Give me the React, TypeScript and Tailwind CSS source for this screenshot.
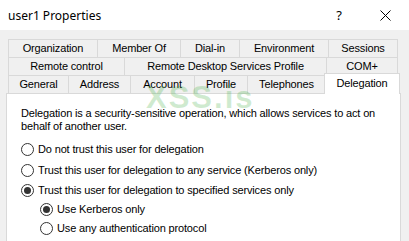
import React from 'react';

const tabRow1 = [
  { label: 'Organization', w: 'w-[89px]' },
  { label: 'Member Of', w: 'w-[83px]' },
  { label: 'Dial-in', w: 'w-[59px]' },
  { label: 'Environment', w: 'w-[89px]' },
  { label: 'Sessions', w: 'w-[70px]' },
];

const tabRow2 = [
  { label: 'Remote control', w: 'w-[116px]' },
  { label: 'Remote Desktop Services Profile', w: 'w-[202px]' },
  { label: 'COM+', w: 'w-[72px]' },
];

const tabRow3 = [
  { label: 'General', w: 'w-[60px]' },
  { label: 'Address', w: 'w-[62px]' },
  { label: 'Account', w: 'w-[64px]' },
  { label: 'Profile', w: 'w-[53px]' },
  { label: 'Telephones', w: 'w-[78px]' },
];

const Tab: React.FC<{ label: string; w: string; last?: boolean }> = ({ label, w, last }) => (
  <div
    className={`${w} h-full flex items-center justify-center border-t border-l border-[#d9d9d9] bg-[#f0f0f0] text-[#000] ${last ? 'border-r' : ''}`}
  >
    {label}
  </div>
);

const Radio: React.FC<{ checked?: boolean }> = ({ checked }) => (
  <span className="w-[13px] h-[13px] rounded-full border border-[#333333] bg-white flex items-center justify-center shrink-0">
    {checked && <span className="w-[7px] h-[7px] rounded-full bg-[#333333]" />}
  </span>
);

const Option: React.FC<{ label: string; checked?: boolean; className?: string }> = ({ label, checked, className }) => (
  <div className={`flex items-center gap-[4px] h-[14px] ${className ?? ''}`}>
    <Radio checked={checked} />
    <span>{label}</span>
  </div>
);

export default function App() {
  return (
    <div
      className="w-[409px] h-[241px] overflow-hidden bg-[#f0f0f0] flex flex-col relative text-[11px] leading-[13px] tracking-[-0.15px] text-black"
      style={{ fontFamily: '"Liberation Sans", Arial, sans-serif' }}
    >
      {/* Title bar */}
      <div className="h-[30px] bg-white flex items-center shrink-0 tracking-normal">
        <span className="pl-[8px] text-[12px] text-black" style={{ fontFamily: '"Noto Sans", "Open Sans", sans-serif' }}>
          user1 Properties
        </span>
        <span className="ml-auto mr-[38px] text-[13px]" style={{ fontFamily: '"Noto Sans", sans-serif' }}>?</span>
        <svg width="11" height="11" viewBox="0 0 11 11" className="mr-[18px]">
          <path d="M0.5 0.5 L10.5 10.5 M10.5 0.5 L0.5 10.5" stroke="#000" strokeWidth="1" />
        </svg>
      </div>

      {/* Tabs */}
      <div className="flex flex-col pl-[8px] mt-[9px] shrink-0">
        <div className="flex h-[18px]">
          {tabRow1.map((t, i) => (
            <Tab key={t.label} {...t} last={i === tabRow1.length - 1} />
          ))}
        </div>
        <div className="flex h-[18px]">
          {tabRow2.map((t, i) => (
            <Tab key={t.label} {...t} last={i === tabRow2.length - 1} />
          ))}
        </div>
        <div className="flex h-[18px]">
          {tabRow3.map((t) => (
            <Tab key={t.label} {...t} />
          ))}
          <div className="relative z-10 w-[76px] h-[21px] -mt-[2px] -ml-px flex items-start justify-center pt-[3px] bg-white border-t border-l border-r border-[#d9d9d9]">
            Delegation
          </div>
        </div>
      </div>

      {/* Panel */}
      <div className="mx-[6px] mr-[8px] flex-1 bg-white border border-[#d9d9d9] border-b-0 pl-[14px] pt-[13px]">
        <p>
          Delegation is a security-sensitive operation, which allows services to act on
          <br />
          behalf of another user.
        </p>
        <div className="flex flex-col">
          <Option className="mt-[9px]" label="Do not trust this user for delegation" />
          <Option className="mt-[7px]" label="Trust this user for delegation to any service (Kerberos only)" />
          <Option className="mt-[6px]" checked label="Trust this user for delegation to specified services only" />
          <Option className="mt-[5px] ml-[19px]" checked label="Use Kerberos only" />
          <Option className="mt-[5px] ml-[19px]" label="Use any authentication protocol" />
        </div>
      </div>

      {/* Watermark */}
      <span
        className="absolute left-[146px] top-[82px] z-20 text-[31px] font-bold leading-none text-[#3fae3f]/25 pointer-events-none tracking-[2px]"
        style={{ fontFamily: '"Liberation Sans", Arial, sans-serif' }}
      >
        XSS.is
      </span>
    </div>
  );
}
